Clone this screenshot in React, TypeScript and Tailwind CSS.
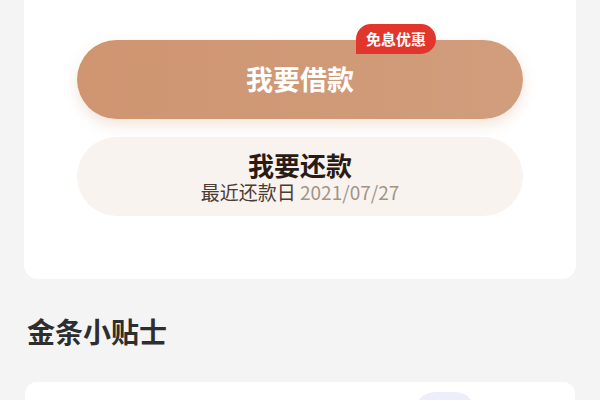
export default function App() {
  return (
    <div
      className="h-[400px] w-[600px] overflow-hidden bg-[#f4f4f4]"
      style={{ fontFamily: '"Noto Sans CJK SC", "Noto Sans", sans-serif' }}
    >
      <div className="mx-[24px] rounded-b-[14px] bg-white px-[53px] pb-[63px] pt-[40px]">
        <div className="relative">
          <button className="flex h-[79px] w-full items-center justify-center rounded-full bg-gradient-to-r from-[#cf9571] to-[#d19d7c] text-[27px] font-bold text-white shadow-[0_6px_14px_rgba(207,150,110,0.25)]">
            我要借款
          </button>
          <span className="absolute right-[87px] top-[-16px] rounded-[15px] rounded-bl-none bg-[#e2352b] px-[10px] py-[3px] text-[15px] font-bold leading-[24px] text-white">
            免息优惠
          </span>
        </div>
        <button className="mt-[18px] flex h-[79px] w-full flex-col items-center justify-center rounded-full bg-[#f9f3f0]">
          <span className="text-[26px] font-bold leading-[31px] text-[#2a1c14]">我要还款</span>
          <span className="text-[19px] leading-[24px] text-[#4b3b31]">
            最近还款日 <span className="text-[#a39384]">2021/07/27</span>
          </span>
        </button>
      </div>
      <h2 className="mx-[27px] mt-[33px] text-[28px] font-bold leading-[38px] text-[#2e2e2e]">
        金条小贴士
      </h2>
      <div className="mx-[25px] mt-[32px] flex h-[60px] justify-end rounded-[12px] bg-white pr-[100px] pt-[10px]">
        <div className="h-[40px] w-[60px] rounded-full bg-[#eeeefa]" />
      </div>
    </div>
  );
}
